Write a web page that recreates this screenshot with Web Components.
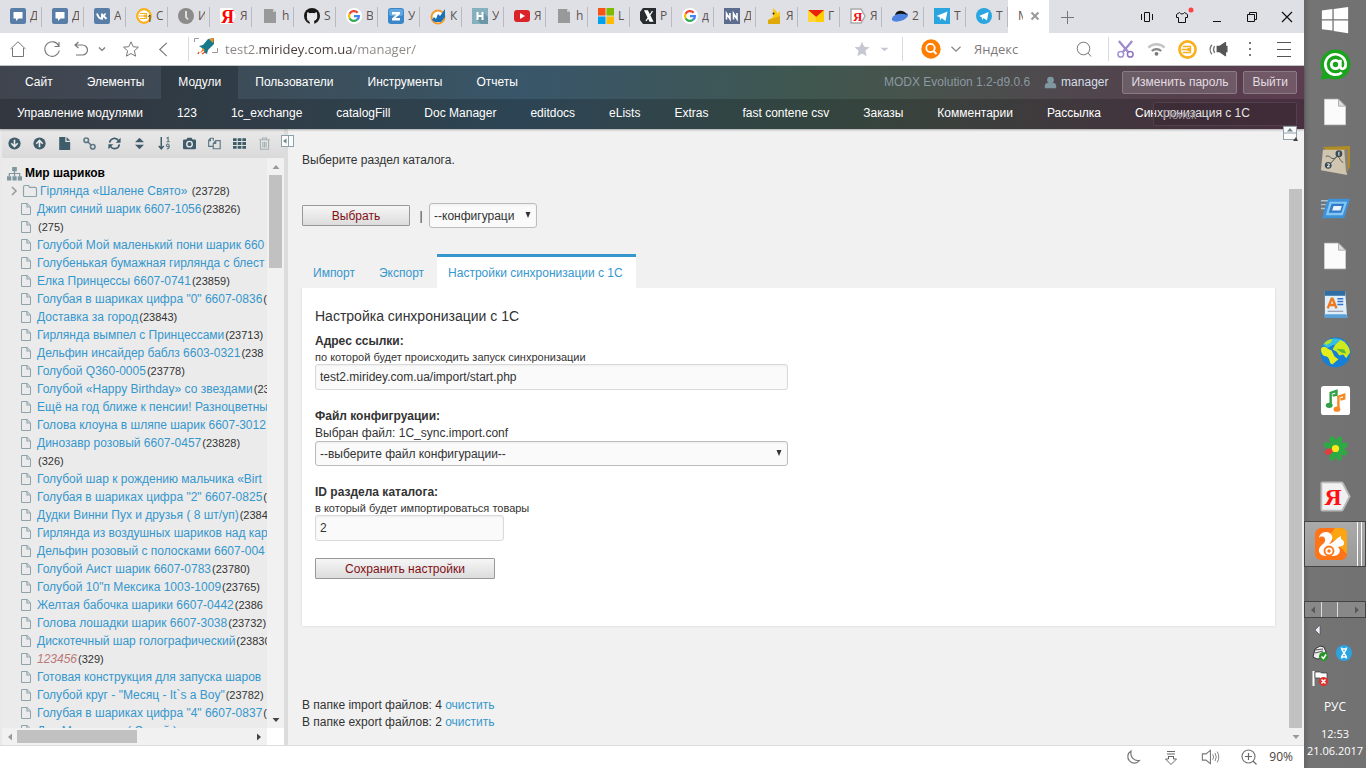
<!DOCTYPE html>
<html lang="ru">
<head>
<meta charset="utf-8">
<title>MODX Evolution</title>
<style>
	html, body { height: 100%; }
	body {
		margin: 0;
		display: flex;
		overflow: hidden;
		background: #f1f1f1;
		color: #333;
		font: 12px/18px "Liberation Sans", Arial, sans-serif;
		--link: #3697cd;
		--ui-font: "Open Sans", "Noto Sans", sans-serif;
	}
	browser-window { flex: 1; min-width: 0; }
</style>
</head>
<body>
<browser-window>
	<tab-strip slot="tabs"></tab-strip>
	<address-bar slot="address"></address-bar>
	<manager-header></manager-header>
	<manager-body>
		<doc-tree slot="tree"></doc-tree>
		<sync-page></sync-page>
	</manager-body>
	<status-bar slot="status"></status-bar>
</browser-window>
<task-bar></task-bar>

<script>
const docShape = '<path d="M3 1h12l6 6v16H3z" fill="#fbfbfb" stroke="#ddd" stroke-width=".5"/><path d="M15 1v6h6z" fill="#ddd" stroke="#999" stroke-width=".6"/>';
const googleShape = '<circle cx="8" cy="8" r="8" fill="#fff"/><g fill="none" stroke-width="2.3"><path d="M11.6 4.7A5 5 0 0 0 3.6 5.7" stroke="#ea4335"/><path d="M3.6 5.7A5 5 0 0 0 3.7 10.5" stroke="#fbbc05"/><path d="M3.7 10.5A5 5 0 0 0 11.2 11.7" stroke="#34a853"/><path d="M11.2 11.7A5 5 0 0 0 12.9 8.1H8" stroke="#4285f4"/></g>';
const chatShape = '<rect width="16" height="16" rx="2" fill="#587ea8"/><path d="M3.5 4h9v6.5H8.5L6 13v-2.5H3.5z" fill="#fff"/>';
const fileShape = '<path d="M2 1h9l3 3v11H2z" fill="#999"/><path d="M11 1v3h3z" fill="#ccc"/>';
const sbShape = '<circle cx="8" cy="8" r="6.8" fill="#fff" stroke="#fab01e" stroke-width="2.2"/><path d="M4 5.5h6.5v1.8H8M3 8h5M4 10.5h6.5V8.700H8M8 7.300v1.400" stroke="#fab01e" stroke-width="1.200" fill="none"/>';

// name: [viewBox size, markup]
const ICONS = {
	chat: [16, chatShape],
	vk: [16, '<rect width="16" height="16" rx="2" fill="#587ea8"/><path d="M3 5.5c1 3.500 2.500 5.300 5 5.300V5.500M8 8c2-.300 3-1.200 3.500-2.500M8 8c2 .200 3.300 1.300 4.500 2.800" fill="none" stroke="#fff" stroke-width="1.900"/>'],
	savefrom: [16, sbShape + '<text x="11" y="14" font-size="9" fill="#000">1</text>'],
	clock: [16, '<circle cx="8" cy="8" r="8" fill="#8b8b8b"/><path d="M8 3v6l2 2.500" stroke="#ddd" stroke-width="2" fill="none"/>'],
	yandex: [16, '<path d="M0 0h12l4 8-4 8H0z" fill="#fff"/><text x="1" y="15" font-size="18" font-family="Liberation Serif" font-weight="bold" fill="#f00">Я</text>'],
	file: [16, fileShape],
	github: [16, '<circle cx="8" cy="8" r="8" fill="#191717"/><path d="M5.800 16v-3C3 12 2.500 9.800 3 7.500c0-1 0-2.500.4-3.300 1 0 1.600.6 2.400 1 1.500-.4 3-.4 4.500 0 .8-.4 1.400-1 2.400-1 .5.8.5 2.300.5 3.300.4 2.500-.3 4.500-3 5.300V16z" fill="#e8e8ea"/><path d="M3 11.500c1.500 0 1 2 3 2" stroke="#e8e8ea" fill="none"/>'],
	google: [16, googleShape],
	zed: [16, '<rect width="16" height="16" rx="3" fill="#3b86c8"/><rect x="1" y="1" width="14" height="7" rx="2" fill="#62a8e0"/><path d="M4 4h8v2l-4.500 4H12v2.500H4v-2L8.500 6.500H4z" fill="#fff"/>'],
	chart: [16, '<circle cx="8" cy="9" r="6.500" fill="#fff" stroke="#f19b2c" stroke-width="2"/><path d="M2 12l2-3 2 2 2-5 2 2 5-7v8l-4 5H5z" fill="#1c70b8"/>'],
	hab: [16, '<rect width="16" height="16" fill="#86b0be"/><path d="M11 4l5 5v7H9l-4-4z" fill="#6b96a8"/><path d="M5.500 4v8M10.500 4v8M5 8h6" stroke="#fff" stroke-width="2"/>'],
	youtube: [16, '<rect y="2" width="16" height="12" rx="3" fill="#d9252a"/><path d="M6 5l5 3-5 3z" fill="#fff"/>'],
	windows4: [16, '<path d="M0 0h7.500v7.500H0z" fill="#f65314"/><path d="M8.500 0H16v7.500H8.500z" fill="#7cbb00"/><path d="M0 8.500h7.500V16H0z" fill="#00a1f1"/><path d="M8.500 8.500H16V16H8.500z" fill="#fb0"/>'],
	xbox: [16, '<path d="M3 0h13v16H3L0 12V4z" fill="#262c30"/><path d="M5 3h2.500l5 10H10zM12.500 3L6 13" stroke="#fff" stroke-width="1.300" fill="#fff"/>'],
	nn: [16, '<rect width="16" height="16" fill="#5c6c8c"/><path d="M2.500 11.500V5.500l3.500 5.500V5M9.500 11.500V5.500l3.500 5.500V5" stroke="#fff" stroke-width="1.600" fill="none"/>'],
	bird: [16, '<path d="M7 0l4 4v2l3-3v13H2v-4l5-3z" fill="#fcc80e"/><path d="M2 12l12-4v8H2z" fill="#e0a90b"/><circle cx="7.500" cy="5.500" r="1" fill="#222"/>'],
	mail: [16, '<rect y="2" width="16" height="12" fill="#fc0"/><path d="M0 2h16L8 9z" fill="#e8210d"/><path d="M0 2l8 7v5H0z" fill="#ffd633"/>'],
	yabrowser: [16, '<path d="M1 1h10l4 7-4 7H1z" fill="#fff" stroke="#aaa" stroke-width="1.500"/><text x="3" y="12.500" font-size="13" font-weight="bold" font-family="Liberation Serif" fill="#e11">Я</text>'],
	cap: [16, '<ellipse cx="8" cy="9" rx="8.500" ry="4" transform="rotate(-18 8 9)" fill="#4d82e0"/><path d="M3 7c1-5 9-6 12 0-4-2-8-1.500-12 0z" fill="#151515"/>'],
	telegramSq: [16, '<rect width="16" height="16" fill="#2ba5e0"/><path d="M2.500 8L13.500 3.500 11.500 13 7.500 10l-1 2.500-1-3.500z" fill="#fff"/>'],
	telegram: [16, '<circle cx="8" cy="8" r="8" fill="#2ba5e0"/><path d="M3 8l9.500-4L11 12.500 7.500 10l-1 2-1-3z" fill="#fff"/>'],
	closeTab: [16, '<path d="M4.500 4.500l7 7M11.500 4.500l-7 7" stroke="#999" stroke-width="2"/>'],
	plus: [16, '<path d="M8.500 2v13M2 8.500h13" stroke="#777"/>'],
	split: [16, '<path d="M5.500 3.500h5v9h-5zM2.500 5v6M13.500 5v6" fill="none" stroke="#111"/>'],
	shirt: [16, '<path d="M5.500 3.500L2.500 5.500v3h2v5h7v-5h2v-3l-3-2c-1 2-4 2-5 0z" fill="none" stroke="#111"/><circle cx="17" cy="1" r="2.500" fill="#ff4040"/>'],
	minimise: [16, '<path d="M4 12.500h8" stroke="#111"/>'],
	restore: [16, '<path d="M3.500 5.500h7v7h-7zM5.500 5V3.500h7v7H11" fill="none" stroke="#111"/>'],
	close: [16, '<path d="M3 3l10 10M13 3L3 13" stroke="#111" stroke-width="1.200"/>'],
	home: [16, '<path d="M.5 8L8 .8 15.500 8M2.500 7v8.500h11V7" fill="none" stroke="#777"/>'],
	reload: [16, '<path d="M14.800 5A7.300 7.300 0 1 0 15.300 9.500M15 1v4.500h-4.500" fill="none" stroke="#777" stroke-width="1.100"/>'],
	undo: [16, '<path d="M5.500 1L2 4l3.500 3M2 4h7.500a4.700 4.700 0 0 1 0 10H3" fill="none" stroke="#777" stroke-width="1.200"/>'],
	chev: [16, '<path d="M2 5l6 6 6-6" fill="none" stroke="#888" stroke-width="1.600"/>'],
	chevSmall: [8, '<path d="M1 2.500l3 3 3-3" fill="none" stroke="#777" stroke-width="1.200"/>'],
	star: [16, '<path d="M8 .800l2.200 4.900 5.200.500-4 3.600 1.200 5.400L8 12.500l-4.600 2.700 1.200-5.400-4-3.600 5.200-.500z" fill="none" stroke="#777"/>'],
	starFull: [16, '<path d="M8 .800l2.200 4.900 5.200.500-4 3.600 1.200 5.400L8 12.500l-4.600 2.700 1.200-5.400-4-3.600 5.200-.500z" fill="#c5c8d2"/>'],
	back: [16, '<path d="M11.500 1L4 8l7.500 7" fill="none" stroke="#777" stroke-width="1.200"/>'],
	tri: [16, '<path d="M1 5h14l-7 6z" fill="#c5c8d2"/>'],
	rocket: [24, '<path d="M.500 5V1.500H5M23.500 11v4.500H18" fill="none" stroke="#999"/><path d="M20 1l-6 1-5 6-4 1 3 2 3 5 2 1 1-4 6-6z" fill="#18798c"/><path d="M20 1l-5 1 4 4z" fill="#f68b1e"/><path d="M9 11l-3 5 5-3z" fill="#f68b1e"/><path d="M5 15l-1 2M11 15l-3 2" stroke="#e0533c" stroke-width="1.500"/>'],
	orangeSearch: [20, '<circle cx="10" cy="10" r="9.700" fill="#ff7e00"/><circle cx="9.500" cy="9" r="4.200" fill="none" stroke="#fff" stroke-width="1.800"/><path d="M12.500 12l3 3" stroke="#fff" stroke-width="2"/>'],
	search: [16, '<circle cx="7.500" cy="7.500" r="6.300" fill="none" stroke="#777"/><path d="M12 12l3 3.500" stroke="#777"/>'],
	scissors: [20, '<path d="M3 1l10 12M17 1L7 13" stroke="#9f8bc9" stroke-width="2.400"/><circle cx="5" cy="15" r="3" fill="none" stroke="#a594cd" stroke-width="1.600"/><circle cx="15" cy="15" r="3" fill="none" stroke="#8d76bd" stroke-width="1.600"/>'],
	wifi: [20, '<path d="M1.500 8a12 12 0 0 1 17 0" fill="none" stroke="#c4c4c4" stroke-width="2.400"/><path d="M5 11.500a7.500 7.500 0 0 1 10 0" fill="none" stroke="#888" stroke-width="2.200"/><circle cx="10" cy="14.500" r="2" fill="#777"/>'],
	savefromBig: [16, sbShape],
	horn: [20, '<path d="M8 6h3l6-4h1v4h1.500v7H18v4h-1l-6-4H8z" fill="#555"/><path d="M3 5a8 8 0 0 0 0 10M6 6.500a6 6 0 0 0 0 7" fill="none" stroke="#777" stroke-width="1.500"/>'],
	dots: [16, '<path d="M7 1h2v2H7zM7 7h2v2H7zM7 13h2v2H7z" fill="#777"/>'],
	menu: [16, '<path d="M1 1.500h14M1 8.500h14M1 15.500h14" stroke="#555"/>'],
	user: [16, '<circle cx="8" cy="5" r="4.200" fill="#7e97a0"/><path d="M1 15V12c0-3 3-4 7-4s7 1 7 4v3z" fill="#7e97a0"/>'],
	down: [16, '<circle cx="8" cy="8" r="7.500" fill="#3f5c6b"/><path d="M8 3.500v8M4 7.700l4 4 4-4" fill="none" stroke="#e9e9e9" stroke-width="2"/>'],
	up: [16, '<circle cx="8" cy="8" r="7.500" fill="#3f5c6b"/><path d="M8 12.500v-8M4 8.300l4-4 4 4" fill="none" stroke="#e9e9e9" stroke-width="2"/>'],
	docFull: [16, '<path d="M1.500 0H9v6h6v10H1.500z" fill="#3f5c6b"/><path d="M10.500 0v4.500H15z" fill="#3f5c6b"/>'],
	chain: [16, '<g fill="none" stroke="#5d7884" stroke-width="2"><circle cx="4" cy="4" r="2.800"/><circle cx="12" cy="12" r="2.800"/><path d="M5.500 5.500l5 5"/></g>'],
	refresh: [16, '<path d="M2 7a6 6 0 0 1 11-2.500M14 9a6 6 0 0 1-11 2.500" fill="none" stroke="#3f5c6b" stroke-width="2"/><path d="M15.500 1v6h-6zM.500 15V9h6z" fill="#3f5c6b"/>'],
	sort: [16, '<path d="M8 1l5.500 5.500h-11zM8 15l5.500-5.500h-11z" fill="#3f5c6b"/>'],
	sort19: [16, '<path d="M4 0v14M1 11l3 3.500L7 11" fill="none" stroke="#3f5c6b" stroke-width="1.800"/><path d="M10.500 1.500l2-1v5M10.500 5.800h4M13.800 10.500a1.700 1.700 0 1 0-3 1c1 .800 3 .300 3-1zm0 0c.200 2-.500 4-3 4.300" fill="none" stroke="#5d7884" stroke-width="1.400"/>'],
	camera: [16, '<path d="M0 4.500Q0 3 1.500 3h2.700L5.500 1h5l1.300 2h2.700Q16 3 16 4.500v9q0 1.500-1.500 1.500h-13Q0 15 0 13.500z" fill="#3f5c6b"/><circle cx="8" cy="8.800" r="3.400" fill="none" stroke="#e9e9e9" stroke-width="1.700"/>'],
	copy: [16, '<path d="M6.500 4.500v-3H3L.800 4v7.500h5.500M9.500 4.500h5.500v10H6.500V8zM9.500 4.500V8h-3M3 2v2.500H1" fill="none" stroke="#5d7884" stroke-width="1.400"/>'],
	grid: [16, '<path d="M0 1.500h4.500v3.500H0zM5.800 1.500h4.500v3.500H5.800zM11.500 1.500H16v3.500h-4.500zM0 6.300h4.500v3.500H0zM5.800 6.300h4.500v3.500H5.800zM11.500 6.300H16v3.500h-4.500zM0 11h4.500v3.500H0zM5.800 11h4.500v3.500H5.800zM11.500 11H16v3.500h-4.500z" fill="#3f5c6b"/>'],
	trash: [16, '<path d="M1.500 3.500h13M5.500 3V1.200h5V3M3 4v11h10V4M6 6v7M8 6v7M10 6v7" fill="none" stroke="#a3afb3" stroke-width="1.300"/>'],
	sitemap: [16, '<path d="M5.500 1h5v4.500h-5zM0 11h4.500v4.500H0zM5.800 11h4.500v4.500H5.800zM11.500 11H16v4.500h-4.500z" fill="#7f969e"/><path d="M8 5v6M2.500 11V8h11v3" fill="none" stroke="#7f969e" stroke-width="1.300"/>'],
	folder: [16, '<path d="M1.500 12.500V4Q1.500 2.500 3 2.500h3.500l1 1.800H13q1.500 0 1.500 1.200v7q0 1-1.200 1H2.700q-1.200 0-1.200-1z" fill="none" stroke="#8ea3ab" stroke-width="1.200"/>'],
	page: [12, '<path d="M1.500.500h5.700l3.300 3.300v7.700h-9z" fill="none" stroke="#8ea3ab"/><path d="M7 .500V4h3.500" fill="none" stroke="#8ea3ab" stroke-width="1.200"/>'],
	arrowR: [12, '<path d="M4 2l4 4-4 4" fill="none" stroke="#999" stroke-width="1.500"/>'],
	hidePanel: [16, '<rect x="1.500" y="2.500" width="12" height="11" fill="#fbfbfb" stroke="#8fa1a8"/><path d="M8.500 2.500v11" stroke="#8fa1a8"/><path d="M6.500 5.500v5L3 8z" fill="#6d858e"/>'],
	hideTop: [16, '<rect x="1.500" y="1.500" width="13" height="13" fill="#fbfbfb" stroke="#8fa1a8"/><path d="M1.500 8h13" stroke="#8fa1a8"/><path d="M5 6.500h6L8 3z" fill="#6d858e"/><path d="M16 16h-5l3-4z" fill="#444"/>'],
	triUp: [8, '<path d="M4 2L7.500 6h-7z" fill="#999"/>'],
	triDown: [8, '<path d="M4 6L7.500 2h-7z" fill="#444"/>'],
	triSelect: [8, '<path d="M4 7L6.500 1h-5z" fill="#333"/>'],
	triDownPale: [8, '<path d="M4 6L7.500 2h-7z" fill="#999"/>'],
	triLeft: [8, '<path d="M2 4L6 .500v7z" fill="#999"/>'],
	triLeftDark: [8, '<path d="M2 4L6 .500v7z" fill="#444"/>'],
	triRight: [8, '<path d="M6 4L2 .500v7z" fill="#444"/>'],
	moon: [16, '<path d="M6 2a6.500 6.500 0 1 0 8.500 9.500C9 12.500 5 8 6 2z" fill="none" stroke="#777" stroke-width="1.200"/>'],
	download: [16, '<path d="M4 2.500h8M4 5h8M5 7.500h6M5.500 7v3H2.500L8 15.500l5.500-5.500h-3V7" fill="none" stroke="#666"/>'],
	sound: [20, '<path d="M1.500 6.500h4l5-4v15l-5-4h-4z" fill="none" stroke="#777" stroke-width="1.200"/><path d="M13 7q2 3 0 6M15.500 5.500q3 4.500 0 9M18 4q3.500 6 0 12" fill="none" stroke="#777"/>'],
	zoomIn: [16, '<circle cx="7.500" cy="7.500" r="6.500" fill="none" stroke="#777" stroke-width="1.200"/><path d="M7.500 4v7M4 7.500h7M12 12l3.500 3.500" stroke="#666" stroke-width="1.200"/>'],
	start: [32, '<path d="M1 5l12-1.500V15H1zM14.500 3.300L31 1v14H14.500zM1 16.500h12V28L1 26.500zM14.500 16.500H31V31l-16.500-2.300z" fill="#fff"/>'],
	agent: [32, '<circle cx="16" cy="16" r="15.500" fill="#18a51c"/><path d="M3 24L.500 31.500l10-1z" fill="#18a51c"/><circle cx="16" cy="16" r="4.300" fill="none" stroke="#fff" stroke-width="3"/><path d="M21 11v7c0 4 5.500 3 5.500-2a10.500 10.500 0 1 0-4 8.200" fill="none" stroke="#fff" stroke-width="2.800"/>'],
	blank: [24, docShape],
	plan: [32, '<path d="M3 2l28-1v21l-4 8z" fill="#b08c22"/><path d="M3 5h23l2 26-27-5z" fill="#cfc5b0"/><path d="M25 5l2 25 2-6V4z" fill="#8d8372"/><path d="M6 12c4-3 6 5 10 1s4 4 8 5M10 20L19 10" stroke="#555" stroke-width="1" fill="none"/><circle cx="19.500" cy="9" r="3.500" fill="#3b4a54"/><circle cx="8.500" cy="21" r="3.500" fill="#3b4a54"/><path d="M19.500 7v4M7.500 19.500h2v1.500l-2 1.500h2.500" stroke="#fff" stroke-width="1" fill="none"/>'],
	run: [32, '<path d="M8 6h23l-6 20H2z" fill="#3f92d8"/><path d="M10 9h18l-4.500 14H6z" fill="#85c6f4"/><path d="M12 11h13l-3 9.500H9z" fill="#2f7cc8"/><path d="M14 13.500h8.500l-1.500 4.500h-8.500z" fill="#e9f2ff"/><path d="M1 8h7M1 12h5M1 16h4" stroke="#a9c5da" stroke-width="1.500"/>'],
	wordpad: [32, '<path d="M5 2h21l2 28H5z" fill="#dfeefb"/><path d="M5 2h21v5H5z" fill="#2f6ea5"/><path d="M4 26h23l2 4H5z" fill="#5aa0d8"/><path d="M8 20l4-10h1l4 10M10 16.500h5" stroke="#ee7a1b" stroke-width="2.500" fill="none"/><path d="M18 10h6M18 13h6M18 16h6" stroke="#3473c6" stroke-width="1.500"/><path d="M8 23h16" stroke="#889"/>'],
	globe: [32, '<circle cx="16" cy="16" r="15.500" fill="#1580d8"/><path d="M3 8C8 1 18-1 26 5l-4 5-8-2-6 3z" fill="#36bfe2"/><path d="M1 12c2-3 5-2 7 0l4 2 3 6 4 3-6 5c-4 0-2-6-6-8-4 0-6-3-6-8z" fill="#e4ee1c"/><path d="M4 7c3-4 6-5 9-5l-2 4-4 2z" fill="#b8e028"/><path d="M15 9l6-6c6 2 10 8 10 13l-4 6-3-4-4 1-3-4-4-2z" fill="#d0e81e"/><path d="M17 12l8 1 2 4-5-1z" fill="#58b83a"/>'],
	music: [32, '<rect x="1" y="1" width="30" height="30" rx="3" fill="#fff"/><path d="M11 21V8l6-2v4l-4 1" fill="none" stroke="#33a047" stroke-width="2.500"/><ellipse cx="9.500" cy="21" rx="3.500" ry="2.700" fill="#33a047"/><path d="M19 25V12l6-2v4l-4 1" fill="none" stroke="#f58a28" stroke-width="2.500"/><ellipse cx="17.500" cy="25" rx="3.500" ry="2.700" fill="#f58a28"/>'],
	icq: [36, '<g fill="#2eaa45"><ellipse cx="18" cy="9" rx="3.600" ry="6" transform="rotate(-20 18 18)"/><ellipse cx="18" cy="9" rx="3.600" ry="6" transform="rotate(25 18 18)"/><ellipse cx="18" cy="9" rx="3.600" ry="6" transform="rotate(70 18 18)"/><ellipse cx="18" cy="9" rx="3.600" ry="6" transform="rotate(115 18 18)"/><ellipse cx="18" cy="9" rx="3.600" ry="6" transform="rotate(158 18 18)"/><ellipse cx="18" cy="9" rx="3.600" ry="6" transform="rotate(200 18 18)"/><ellipse cx="18" cy="9" rx="3.600" ry="6" transform="rotate(-68 18 18)"/></g><ellipse cx="18" cy="9.500" rx="3.400" ry="4.800" transform="rotate(-115 18 18)" fill="#e23c3c"/><circle cx="18" cy="18" r="4.200" fill="#fde81c"/>'],
	yaBig: [34, '<path d="M1.500 2.500q0-1 1-1H23q1.500 0 2 1L32.500 17l-7.500 14.500q-.500 1-2 1H2.500q-1 0-1-1z" fill="#f1f1f1" stroke="#b9b9b9" stroke-width="2"/><text x="5" y="26" font-size="26" font-family="Liberation Serif" font-weight="bold" fill="#f11">Я</text>'],
	uc: [32, '<rect width="32" height="32" rx="6" fill="#ff7416"/><path d="M32 6v20L14 8 20 0h6q6 0 6 6z" fill="#fba512"/><path d="M11 28C5 28 2 23 5 19c2-3 6-4 5-8C9 8 6 8 4 10c1-7 11-8 13-2 1 3-1 6-3 8 5-1 7-6 12-8v3c4 2 4 6 1 7l-4 1c4 4 1 9-5 9z" fill="#fff"/><circle cx="14" cy="23" r="4.500" fill="#fff" stroke="#ff7416" stroke-width="1.800"/><circle cx="14" cy="23" r="1.700" fill="#ff7416"/>'],
	shell: [16, '<path d="M1 12L3 4l5-3 4 1 2 5-1 6-8 1z" fill="#eee" stroke="#333"/><path d="M3 5l8-1M3 8l8-2" stroke="#555"/><circle cx="11.500" cy="11.500" r="4.500" fill="#26962b"/><path d="M9.500 11.500l2 2 2.500-4" fill="none" stroke="#fff" stroke-width="1.500"/>'],
	dna: [16, '<circle cx="8" cy="8" r="8" fill="#2aa3e0"/><path d="M5.500 2.500c0 5 5 6 5 11M10.500 2.500c0 5-5 6-5 11M6 4h4M6 12h4" fill="none" stroke="#fff" stroke-width="1.500"/>'],
	flag: [16, '<path d="M1.500 1v15" stroke="#fff" stroke-width="2"/><path d="M3 2h5l2 1h5v6H9L8 8H3z" fill="#fff" stroke="#333" stroke-width=".700"/><circle cx="11.500" cy="11.500" r="4.500" fill="#e02f2a"/><path d="M9.500 9.500l4 4M13.500 9.500l-4 4" stroke="#fff" stroke-width="1.500"/>'],
	trayArrow: [12, '<path d="M8 1v10L3 6z" fill="#eef" stroke="#444" stroke-width=".600"/>'],
};

function define(name, css, markup) {
	customElements.define(name, class extends HTMLElement {
		constructor() {
			super();
			this.attachShadow({ mode: 'open' });
		}

		connectedCallback() {
			const html = typeof markup === 'function' ? markup(this) : markup;
			this.shadowRoot.innerHTML = `<style>:host, *, ::before { box-sizing: border-box; } ${css}</style>${html}`;
		}
	});
}

const icon = (name, size = 16) => `<ui-icon name="${name}" size="${size}"></ui-icon>`;

define('ui-icon', `
	:host { display: inline-flex; flex: none; }
	svg { display: block; overflow: visible; }
`, (el) => {
	const [box, shape] = ICONS[el.getAttribute('name')];
	const size = el.getAttribute('size');
	return `<svg width="${size}" height="${size}" viewBox="0 0 ${box} ${box}" aria-hidden="true">${shape}</svg>`;
});

define('browser-window', `
	:host { display: flex; flex-direction: column; height: 100%; }
	main { flex: 1; min-height: 0; display: flex; flex-direction: column; border-top: 1px solid #c3c8c9; }
	::slotted(manager-body) { flex: 1; min-height: 0; }
`, `
	<slot name="tabs"></slot>
	<slot name="address"></slot>
	<main><slot></slot></main>
	<slot name="status"></slot>
`);

const TABS = [
	['chat', 'Д'], ['chat', 'Д'], ['vk', 'А'], ['savefrom', 'С'], ['clock', 'И'], ['yandex', 'Я'],
	['file', 'h'], ['github', 'S'], ['google', 'В'], ['zed', 'У'], ['chart', 'К'], ['hab', 'У'],
	['youtube', 'Я'], ['file', 'h'], ['windows4', 'L'], ['xbox', 'P'], ['google', 'д'], ['nn', 'Д'],
	['bird', 'Я'], ['mail', 'Г'], ['yabrowser', 'Я'], ['cap', '2'], ['telegramSq', 'T'], ['telegram', 'T'],
];

define('tab-strip', `
	:host { display: flex; height: 33px; background: #dfe0e6; font: 12px/16px var(--ui-font); }
	.tab { width: 42px; padding: 8px 4px 0 10px; display: flex; gap: 4px; color: #5d5350; position: relative; }
	.tab::before { content: ''; position: absolute; right: 0; top: 7px; height: 20px; border-right: 1px solid #b9b9bf; }
	.tab span { width: 7px; overflow: hidden; }
	.active { width: 41px; padding: 8px 4px 0 10px; display: flex; gap: 4px; background: #fff; color: #5d5350; }
	.active span { width: 5px; overflow: hidden; }
	button { border: 0; padding: 0; background: none; display: flex; align-items: center; justify-content: center; width: 35px; height: 33px; }
	.controls { margin-left: auto; display: flex; }
	.active button { width: 16px; height: 16px; }
`, `
	${TABS.map(([name, text]) => `<div class="tab">${icon(name)}<span>${text}</span></div>`).join('')}
	<div class="active"><span>М</span><button aria-label="Закрыть вкладку">${icon('closeTab')}</button></div>
	<button aria-label="Новая вкладка">${icon('plus')}</button>
	<div class="controls">
		${['split', 'shirt', 'minimise', 'restore', 'close'].map((n) => `<button aria-label="${n}">${icon(n)}</button>`).join('')}
	</div>
`);

define('address-bar', `
	:host { display: flex; align-items: center; height: 32px; padding-right: 1px; background: #fff; font: 13px/20px var(--ui-font); }
	button { border: 0; padding: 0; background: none; display: flex; align-items: center; justify-content: center; width: 24px; height: 30px; }
	.nav { display: flex; align-items: center; padding: 0 13px 0 1px; }
	.nav .wide { width: 34px; }
	.nav .small { width: 18px; }
	.nav .fav { width: 40px; }
	.sep { width: 1px; height: 24px; background: #d9dae0; }
	input { border: 0; outline: 0; padding: 0; background: none; font: inherit; color: #807a78; min-width: 0; }
	input::placeholder { color: #807a78; opacity: 1; }
	/* the host name stands out between the subdomain and the path */
	.url {
		flex: 1; margin: 0 8px 0 7px; color: #6b6462;
		background: linear-gradient(90deg, #8a8583 34px, #463a38 34px, #463a38 127px, #8a8583 127px);
		-webkit-background-clip: text; background-clip: text;
		-webkit-text-fill-color: transparent;
	}
	.site { margin-left: 5px; }
	.engine { width: 38px; margin-left: 9px; }
	.find { width: 86px; margin-left: 12px; }
	.lens { width: 48px; }
	.tools { display: flex; padding-left: 1px; }
	.tools button { width: 31px; }
	.tools button:last-child { width: 38px; }
	.narrow { width: 22px; }
	.narrow + .sep { margin-left: 7px; }
`, `
	<div class="nav">
		<button class="wide" aria-label="Домой">${icon('home')}</button>
		<button class="wide" aria-label="Обновить">${icon('reload')}</button>
		<button aria-label="Назад">${icon('undo')}</button>
		<button class="small" aria-label="История">${icon('chevSmall', 8)}</button>
		<button class="fav" aria-label="Закладки">${icon('star')}</button>
		<button aria-label="Свернуть">${icon('back', 15)}</button>
	</div>
	<div class="sep"></div>
	<ui-icon class="site" name="rocket" size="24"></ui-icon>
	<input class="url" aria-label="Адрес" value="test2.miridey.com.ua/manager/">
	<button class="narrow" aria-label="В избранное">${icon('starFull')}</button>
	<button class="narrow" aria-label="Список">${icon('tri', 9)}</button>
	<div class="sep"></div>
	<button class="engine" aria-label="Поисковая система">${icon('orangeSearch', 20)}</button>
	<ui-icon name="chev" size="12"></ui-icon>
	<input class="find" aria-label="Поиск" placeholder="Яндекс">
	<button class="lens" aria-label="Найти">${icon('search')}</button>
	<div class="sep"></div>
	<div class="tools">
		${['scissors', 'wifi', 'savefromBig', 'horn', 'dots', 'menu'].map((n) => `<button aria-label="${n}">${icon(n, n === 'dots' || n === 'menu' ? 16 : 19)}</button>`).join('')}
	</div>
`);

define('manager-header', `
	:host {
		display: block; position: relative; color: #fff;
		background: linear-gradient(100deg, #40444e 0%, #3a5260 32%, #39566a 40%, #40574f 62%, #48534d 70%, #553f4d 90%, #5c3d50 100%);
		box-shadow: 0 1px 2px rgba(0, 0, 0, .3);
		z-index: 1;
	}
	a { color: inherit; text-decoration: none; white-space: nowrap; }
	.top, .sub { display: flex; }
	.top { height: 33px; line-height: 33px; padding: 0 7px 0 8px; }
	.top nav a, .sub a { padding: 0 17px; }
	.top nav { display: flex; }
	.top nav a.on { background: rgba(0, 0, 0, .2); }
	.sub { height: 30px; line-height: 28px; background: rgba(0, 0, 0, .2); }
	.user { margin-left: auto; display: flex; align-items: center; gap: 6px; }
	.version { color: #8b99a0; margin-right: 8px; }
	.name { display: flex; align-items: center; gap: 4px; margin-right: 8px; color: #d5dfea; }
	.user .btn { height: 23px; line-height: 21px; padding: 0 8px; border: 1px solid #8b7b85; border-radius: 2px; background: rgba(255, 255, 255, .14); color: #e3dde1; }
	input {
		position: absolute; right: 7px; bottom: 3px; width: 144px; height: 24px;
		padding: 2px 9px 0; border: 1px solid #53404c; border-radius: 2px;
		background: rgba(0, 0, 0, .1); color: #ccc; font: inherit;
	}
	input::placeholder { color: #9a9096; opacity: 1; }
	.toggle { position: absolute; right: 6px; bottom: -12px; padding: 0; border: 0; background: none; display: flex; }
`, `
	<div class="top">
		<nav>
			<a href="#">Сайт</a><a href="#">Элементы</a><a href="#" class="on">Модули</a>
			<a href="#">Пользователи</a><a href="#">Инструменты</a><a href="#">Отчеты</a>
		</nav>
		<div class="user">
			<span class="version">MODX Evolution 1.2-d9.0.6</span>
			<a class="name" href="#">${icon('user', 13)}manager</a>
			<a class="btn" href="#">Изменить пароль</a>
			<a class="btn" href="#">Выйти</a>
		</div>
	</div>
	<nav class="sub">
		${['Управление модулями', '123', '1c_exchange', 'catalogFill', 'Doc Manager', 'editdocs', 'eLists', 'Extras', 'fast contene csv', 'Заказы', 'Комментарии', 'Рассылка', 'Синхронизация с 1С'].map((t) => `<a href="#">${t}</a>`).join('')}
	</nav>
	<input type="search" aria-label="Поиск" placeholder="Поиск">
	<button class="toggle" aria-label="Скрыть меню">${icon('hideTop', 16)}</button>
`);

define('manager-body', `
	:host { display: flex; position: relative; }
	::slotted(doc-tree) { flex: none; }
	::slotted(sync-page) { flex: 1; min-width: 0; }
	button { position: absolute; left: 280px; top: 4px; padding: 0; border: 0; background: none; display: flex; z-index: 1; }
`, `<slot name="tree"></slot><button aria-label="Скрыть дерево">${icon('hidePanel', 16)}</button><slot></slot>`);

// [title, id, state]
const DOCS = [
	['Джип синий шарик 6607-1056', '(23826)'],
	['', '(275)'],
	['Голубой Мой маленький пони шарик 660', ''],
	['Голубенькая бумажная гирлянда с блест', ''],
	['Елка Принцессы 6607-0741', '(23859)'],
	['Голубая в шариках цифра "0" 6607-0836', '('],
	['Доставка за город', '(23843)'],
	['Гирлянда вымпел с Принцессами', '(23713)'],
	['Дельфин инсайдер баблз 6603-0321', '(238'],
	['Голубой Q360-0005', '(23778)'],
	['Голубой «Happy Birthday» со звездами', '(23'],
	['Ещё на год ближе к пенсии! Разноцветны', ''],
	['Голова клоуна в шляпе шарик 6607-3012', ''],
	['Динозавр розовый 6607-0457', '(23828)'],
	['', '(326)'],
	['Голубой шар к рождению мальчика «Birt', ''],
	['Голубая в шариках цифра "2" 6607-0825', '('],
	['Дудки Винни Пух и друзья ( 8 шт/уп)', '(23846'],
	['Гирлянда из воздушных шариков над кар', ''],
	['Дельфин розовый с полосками 6607-004', ''],
	['Голубой Аист шарик 6607-0783', '(23780)'],
	['Голубой 10"п Мексика 1003-1009', '(23765)'],
	['Желтая бабочка шарики 6607-0442', '(2386'],
	['Голова лошадки шарик 6607-3038', '(23732)'],
	['Дискотечный шар голографический', '(23830'],
	['123456', '(329)', 'off'],
	['Готовая конструкция для запуска шаров', ''],
	['Голубой круг - "Месяц - It`s a Boy"', '(23782)'],
	['Голубая в шариках цифра "4" 6607-0837', '('],
	['Дед Мороз шар ( Синий )', ''],
];

define('doc-tree', `
	:host { display: grid; grid-template: 29px minmax(0, 1fr) 17px / minmax(0, 1fr) 17px; width: 288px; padding: 0 4px 0 2px; background: #e9e9e9; box-shadow: inset -4px 0 #dcdcdc; }
	.tools { grid-column: 1 / 3; display: flex; align-items: center; background: linear-gradient(#e9e9e9, #dadada); }
	.tools button { width: 25px; height: 25px; border: 0; padding: 0; background: none; display: flex; align-items: center; justify-content: center; }
	.list { overflow: hidden; margin: 0; padding: 6px 0 0 18px; list-style: none; background: #ebebeb; }
	li { height: 18px; display: flex; align-items: center; gap: 5px; white-space: nowrap; }
	a { color: var(--link); text-decoration: none; }
	small { font-size: 11px; margin-left: 1px; }
	.root { color: #000; font-weight: bold; gap: 3px; margin-left: -13px; }
	.folder { margin-left: -12px; gap: 2px; }
	.off { color: #bb7979; font-style: italic; }
	.corner { background: #fff; }
`, `
	<div class="tools">
		${['down', 'up', 'docFull', 'chain', 'refresh', 'sort', 'sort19', 'camera', 'copy', 'grid', 'trash'].map((n) => `<button aria-label="${n}">${icon(n, 13)}</button>`).join('')}
	</div>
	<ul class="list">
		<li class="root">${icon('sitemap', 15)}<span>Мир шариков</span></li>
		<li class="folder">${icon('arrowR', 12)}${icon('folder', 16)}<span><a href="#">Гірлянда «Шалене Свято»</a> <small>(23728)</small></span></li>
		${DOCS.map(([title, id, state]) => `<li>${icon('page', 12)}<span>${title && `<a href="#" class="${state || ''}">${title}</a>`}<small>${id}</small></span></li>`).join('')}
	</ul>
	<scroll-track dir="y" style="--thumb: 93px" from="triUp" to="triDown"></scroll-track>
	<scroll-track dir="x" style="--thumb: 120px" from="triLeft" to="triRight"></scroll-track>
	<div class="corner"></div>
`);

define('scroll-track', `
	:host { display: flex; background: #f1f1f1; }
	:host([dir=y]) { flex-direction: column; }
	span { width: 17px; height: 17px; display: flex; align-items: center; justify-content: center; }
	:host([dir=x]) span:first-of-type { width: 15px; }
	.thumb { background: #c1c1c1; }
	:host([dir=y]) .thumb { height: var(--thumb); margin: 0 2px; }
	:host([dir=x]) .thumb { width: var(--thumb); margin: 2px 0; }
	.rest { flex: 1; }
`, (el) => `
	<span>${el.hasAttribute('from') ? icon(el.getAttribute('from'), 8) : ''}</span>
	<div class="thumb"></div>
	<div class="rest"></div>
	<span>${icon(el.getAttribute('to'), 8)}</span>
`);

define('form-field', `
	:host { display: block; width: 473px; margin-bottom: 17px; }
	:host([narrow]) { width: 189px; }
	label { display: block; font-weight: bold; white-space: nowrap; }
	.note { line-height: 16px; white-space: nowrap; }
	.note.hint { font-size: 11px; line-height: 14px; }
	input, select {
		display: block; width: 100%; height: 26px; padding: 0 4px; appearance: none;
		border: 1px solid #d9d9d9; border-radius: 3px; background: #fafafa; color: #333; font: inherit;
		box-shadow: inset 0 1px 2px rgba(0, 0, 0, .05);
	}
	select { border-color: #bcbcbc; height: 25px; padding-right: 18px; }
	.box { position: relative; }
	ui-icon { position: absolute; right: 5px; top: 8px; }
`, (el) => {
	const value = el.getAttribute('value');
	const label = el.getAttribute('label');
	const control = el.hasAttribute('select')
		? `<select id="f"${label ? '' : ' aria-label="Конфигурация"'}><option>${value}</option></select>${icon('triSelect', 8)}`
		: `<input id="f" value="${value}">`;
	return `
		${label ? `<label for="f">${label}</label><div class="note ${el.getAttribute('size') || ''}">${el.getAttribute('note')}</div>` : ''}
		<div class="box">${control}</div>
	`;
});

define('action-button', `
	:host { display: block; }
	button { width: 100%; height: 21px; padding: 0; border: 1px solid #989898; border-radius: 1px; background: linear-gradient(#f6f6f6, #dcdcdc); color: #801014; font: inherit; }
`, '<button><slot></slot></button>');

define('sync-page', `
	:host { display: flex; background: #f1f1f1; }
	.content { flex: 1; min-width: 0; padding: 22px 12px 0 14px; }
	a { color: var(--link); text-decoration: none; }
	p { margin: 0; }
	.pick { display: flex; align-items: center; margin-top: 34px; }
	.pick action-button { width: 108px; }
	.pick form-field { width: 108px; margin: 0; }
	.pick i { width: 19px; text-align: center; font-style: normal; padding-left: 3px; }
	.tabs { display: flex; margin-top: 26px; }
	.tabs a { padding: 7px 13px 6px 11px; line-height: 18px; border-top: 3px solid transparent; white-space: nowrap; }
	.tabs a.on { background: #fff; border-color: var(--link); }
	.panel { background: #fff; min-height: 338px; padding: 19px 13px; box-shadow: 0 0 2px rgba(0, 0, 0, .15); clip-path: inset(0 -3px -3px -3px); }
	h2 { margin: 0 0 7px; font-size: 14px; line-height: 18px; font-weight: normal; }
	.panel action-button { width: 180px; }
	footer { margin-top: 71px; line-height: 17px; }
	scroll-track { width: 17px; margin-top: 43px; }
`, `
	<div class="content">
		<p>Выберите раздел каталога.</p>
		<div class="pick">
			<action-button>Выбрать</action-button><i>|</i>
			<form-field select value="--конфигураци"></form-field>
		</div>
		<nav class="tabs">
			<a href="#">Импорт</a><a href="#">Экспорт</a><a href="#" class="on">Настройки синхронизации с 1С</a>
		</nav>
		<section class="panel">
			<h2>Настройка синхронизации с 1С</h2>
			<form-field label="Адрес ссылки:" note="по которой будет происходить запуск синхронизации" size="hint" value="test2.miridey.com.ua/import/start.php"></form-field>
			<form-field label="Файл конфигруации:" note="Выбран файл: 1C_sync.import.conf" select value="--выберите файл конфигурации--"></form-field>
			<form-field narrow label="ID раздела каталога:" note="в который будет импортироваться товары" size="hint" value="2"></form-field>
			<action-button>Сохранить настройки</action-button>
		</section>
		<footer>
			<div>В папке import файлов: 4 <a href="#">очистить</a></div>
			<div>В папке export файлов: 2 <a href="#">очистить</a></div>
		</footer>
	</div>
	<scroll-track dir="y" style="--thumb: 540px" to="triDownPale"></scroll-track>
`);

define('status-bar', `
	:host { display: flex; align-items: center; justify-content: flex-end; gap: 22px; height: 23px; padding-right: 11px; border-top: 1px solid #dcdcdc; background: #fff; color: #4a3f3c; font: 12px/20px var(--ui-font); }
	span { margin-left: -10px; }
`, `${icon('moon')}${icon('download')}${icon('sound', 18)}${icon('zoomIn')}<span>90%</span>`);

define('task-bar', `
	:host { display: flex; flex-direction: column; width: 62px; background: linear-gradient(90deg, #666, #747474 6px, #717171); color: #fff; font: 11px/17px var(--ui-font); }
	button { height: 48px; padding: 0; border: 0; background: none; display: flex; align-items: center; justify-content: center; }
	button:first-of-type { height: 40px; }
	button.active { position: relative; height: 46px; margin-top: 1px; padding-right: 8px; border: 1px solid #fff; outline: 1px solid #444; outline-offset: -1px; background: linear-gradient(#aaa, #999); }
	.active::before { content: ''; position: absolute; right: 3px; top: 0; bottom: 0; width: 5px; border: solid #fff; border-width: 0 1px; }
	.pager { display: grid; grid-template-columns: 17px 16px 1fr; height: 17px; margin-top: 34px; border: 1px solid #444; background: #888; }
	.pager span { display: flex; align-items: center; justify-content: center; border-right: 1px solid #ddd; }
	.pager span:last-child { justify-content: flex-end; padding-right: 4px; border: 0; }
	.pager ui-icon { opacity: .7; }
	.tray { display: grid; grid-template-columns: 16px 16px; gap: 9px 8px; padding: 6px 8px 0; }
	.tray ui-icon:first-of-type { grid-column: 1 / 3; }
	.lang { text-align: center; margin-top: 12px; font-size: 12px; }
	.time { text-align: center; margin-top: 10px; white-space: nowrap; }
`, `
	${['start', 'agent', 'blank', 'plan', 'run', 'blank', 'wordpad', 'globe', 'music', 'icq', 'yaBig'].map((n) => `<button aria-label="${n}">${icon(n, n === 'start' || n === 'blank' ? 28 : 31)}</button>`).join('')}
	<button class="active" aria-label="UC Browser">${icon('uc', 32)}</button>
	<div class="pager"><span>${icon('triLeftDark', 8)}</span><span></span><span>${icon('triRight', 8)}</span></div>
	<div class="tray">${icon('trayArrow', 12)}${icon('shell')}${icon('dna')}${icon('flag')}</div>
	<div class="lang">РУС</div>
	<div class="time">12:53<br>21.06.2017</div>
`);
</script>
</body>
</html>
